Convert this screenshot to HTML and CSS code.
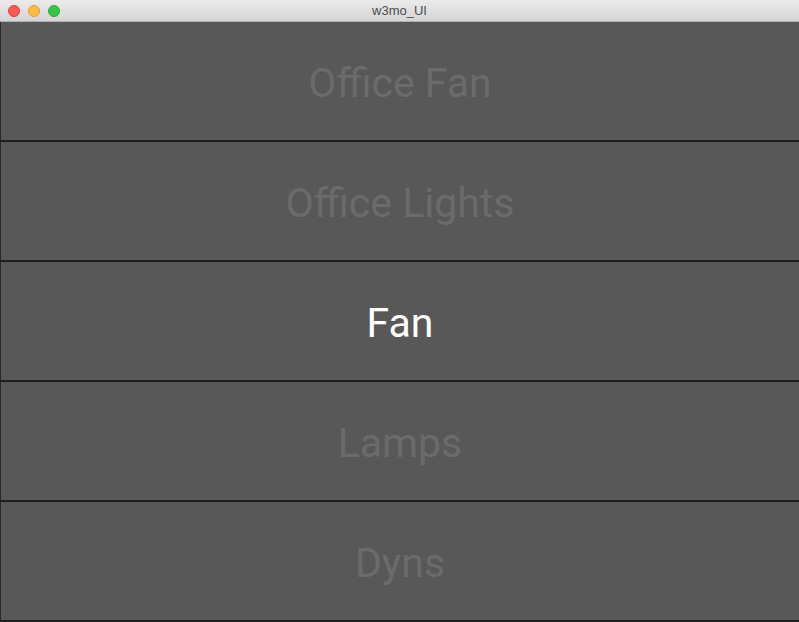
FILE: index.html
```html
<!DOCTYPE html>
<html lang="en">
<head>
    <meta charset="UTF-8">
    <meta name="viewport" content="width=device-width, initial-scale=1.0">
    <title>w3mo_UI</title>
    <link rel="stylesheet" href="styles.css">
</head>

<body>
    <div class="window">
        <div class="titlebar">
            <div class="lights">
                <span class="light close"></span>
                <span class="light min"></span>
                <span class="light max"></span>
            </div>
            <div class="title">w3mo_UI</div>
        </div>

        <div class="list">
            <div class="item">Office Fan</div>
            <div class="item">Office Lights</div>
            <div class="item active">Fan</div>
            <div class="item">Lamps</div>
            <div class="item">Dyns</div>
        </div>
    </div>
</body>
</html>
```

FILE: styles.css
```css
html, body {
    margin: 0;
    padding: 0;
    height: 100%;
    background-color: #585858;
}
.window {
    display: flex;
    flex-direction: column;
    height: 622px;
}
.titlebar {
    position: relative;
    height: 22px;
    box-sizing: border-box;
    background: linear-gradient(#ebebeb, #d5d5d5);
    border-bottom: 1px solid #b0b0b0;
    display: flex;
    align-items: center;
    justify-content: center;
}
.lights {
    position: absolute;
    left: 8px;
    top: 5px;
    display: flex;
    gap: 8px;
}
.light {
    width: 12px;
    height: 12px;
    border-radius: 50%;
    box-sizing: border-box;
}
.light.close {
    background-color: #fc5753;
    border: 1px solid #df3d39;
}
.light.min {
    background-color: #fdbc40;
    border: 1px solid #de9f34;
}
.light.max {
    background-color: #33c748;
    border: 1px solid #27aa35;
}
.title {
    font-family: 'Liberation Sans', Arial, sans-serif;
    font-size: 13px;
    color: #4d4d4d;
}
.list {
    display: flex;
    flex-direction: column;
}
.item {
    height: 120px;
    box-sizing: border-box;
    border-left: 1px solid #2a2a2a;
    border-bottom: 2px solid #1e1e1e;
    display: flex;
    align-items: center;
    justify-content: center;
    font-family: Roboto, 'Liberation Sans', sans-serif;
    font-size: 41px;
    color: #6b6b6b;
    padding-top: 4px;
}
.item.active {
    color: #ffffff;
}
```
